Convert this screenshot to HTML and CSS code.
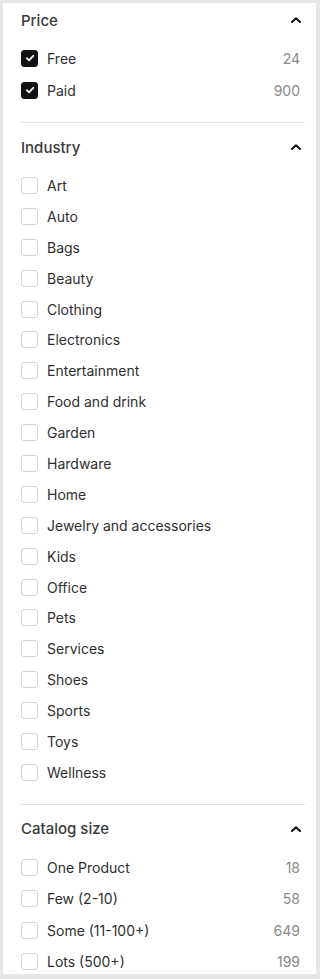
FILE: index.html
```html
<!DOCTYPE html>
<html lang="en">

<head>
    <meta charset="UTF-8">
    <meta name="viewport" content="width=device-width, initial-scale=1.0">
    <title>filters</title>
    <link rel="stylesheet" href="styles.css">
</head>

<body>
    <div class="panel">
        <section class="group first">
            <div class="group-head">
                <span>Price</span>
                <svg class="chevron" viewBox="0 0 10 6" width="10" height="6"><path d="M1 5 L5 1.3 L9 5" /></svg>
            </div>
            <label class="item"><span class="box checked"><svg viewBox="0 0 12 12"><path d="M2.8 6.2 L5 8.4 L9.3 3.8" /></svg></span><span class="name">Free</span><span class="count">24</span></label>
            <label class="item"><span class="box checked"><svg viewBox="0 0 12 12"><path d="M2.8 6.2 L5 8.4 L9.3 3.8" /></svg></span><span class="name">Paid</span><span class="count">900</span></label>
        </section>

        <section class="group industry">
            <div class="group-head">
                <span>Industry</span>
                <svg class="chevron" viewBox="0 0 10 6" width="10" height="6"><path d="M1 5 L5 1.3 L9 5" /></svg>
            </div>
            <label class="item"><span class="box"></span><span class="name">Art</span></label>
            <label class="item"><span class="box"></span><span class="name">Auto</span></label>
            <label class="item"><span class="box"></span><span class="name">Bags</span></label>
            <label class="item"><span class="box"></span><span class="name">Beauty</span></label>
            <label class="item"><span class="box"></span><span class="name">Clothing</span></label>
            <label class="item"><span class="box"></span><span class="name">Electronics</span></label>
            <label class="item"><span class="box"></span><span class="name">Entertainment</span></label>
            <label class="item"><span class="box"></span><span class="name">Food and drink</span></label>
            <label class="item"><span class="box"></span><span class="name">Garden</span></label>
            <label class="item"><span class="box"></span><span class="name">Hardware</span></label>
            <label class="item"><span class="box"></span><span class="name">Home</span></label>
            <label class="item"><span class="box"></span><span class="name">Jewelry and accessories</span></label>
            <label class="item"><span class="box"></span><span class="name">Kids</span></label>
            <label class="item"><span class="box"></span><span class="name">Office</span></label>
            <label class="item"><span class="box"></span><span class="name">Pets</span></label>
            <label class="item"><span class="box"></span><span class="name">Services</span></label>
            <label class="item"><span class="box"></span><span class="name">Shoes</span></label>
            <label class="item"><span class="box"></span><span class="name">Sports</span></label>
            <label class="item"><span class="box"></span><span class="name">Toys</span></label>
            <label class="item"><span class="box"></span><span class="name">Wellness</span></label>
        </section>

        <section class="group catalog">
            <div class="group-head">
                <span>Catalog size</span>
                <svg class="chevron" viewBox="0 0 10 6" width="10" height="6"><path d="M1 5 L5 1.3 L9 5" /></svg>
            </div>
            <label class="item"><span class="box"></span><span class="name">One Product</span><span class="count">18</span></label>
            <label class="item"><span class="box"></span><span class="name">Few (2-10)</span><span class="count">58</span></label>
            <label class="item"><span class="box"></span><span class="name">Some (11-100+)</span><span class="count">649</span></label>
            <label class="item"><span class="box"></span><span class="name">Lots (500+)</span><span class="count">199</span></label>
        </section>
    </div>
</body>

</html>
```

FILE: styles.css
```css
html,
body {
    margin: 0;
    height: 100%;
    background: #e6e6e6;
    overflow: hidden;
}

body {
    padding: 3px 4px 5px 3px;
    box-sizing: border-box;
    font-family: Inter, "Noto Sans", sans-serif;
    color: #303030;
}

.panel {
    height: 971px;
    background: #fff;
    padding: 0 11px 0 18px;
    overflow: hidden;
}

.group {
    padding: 14px 0 16px;
    border-top: 1px solid #e1e1e1;
}

.group.first {
    padding-top: 7px;
    border-top: none;
}

.group-head {
    display: flex;
    justify-content: space-between;
    align-items: center;
    height: 20px;
    margin-bottom: 13px;
    padding-right: 4px;
    font-size: 15px;
    font-weight: 500;
    color: #3a3a3a;
}

.first .group-head {
    margin-bottom: 12px;
}

.chevron {
    fill: none;
    stroke: #111;
    stroke-width: 2;
    stroke-linecap: round;
    stroke-linejoin: round;
}

.item {
    display: flex;
    align-items: center;
    height: 32px;
    padding-right: 5px;
    font-size: 14px;
    cursor: pointer;
}

.industry .item {
    height: 30.9px;
}

.catalog .item {
    height: 31.3px;
}

.box {
    width: 17px;
    height: 17px;
    box-sizing: border-box;
    border: 1px solid #d4d4d4;
    border-radius: 3px;
    margin-right: 9px;
    display: flex;
    align-items: center;
    justify-content: center;
}

.box.checked {
    background: #111;
    border-color: #111;
}

.box svg {
    width: 12px;
    height: 12px;
    fill: none;
    stroke: #fff;
    stroke-width: 1.8;
    stroke-linecap: round;
    stroke-linejoin: round;
}

.name {
    flex: 1;
}

.count {
    color: #8a8a8a;
}
```
